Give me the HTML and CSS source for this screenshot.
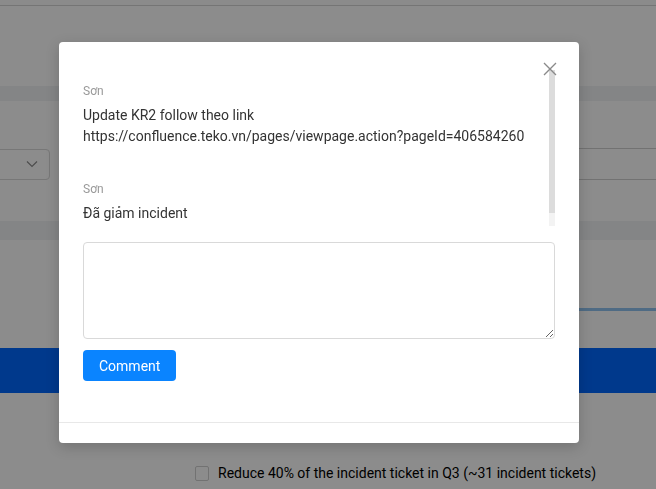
FILE: index.html
```html
<!DOCTYPE html>
<html lang="vi">
<head>
<meta charset="utf-8">
<title>Comments</title>
<link rel="stylesheet" href="styles.css">
</head>
<body>
<div class="page">
  <div class="topbar"></div>
  <div class="band band-1"></div>
  <div class="filters">
    <div class="select">
      <svg class="chev" width="12" height="8" viewBox="0 0 12 8"><path d="M1 1.5 L6 6.5 L11 1.5" fill="none" stroke="#8c8c8c" stroke-width="1.2"/></svg>
    </div>
    <div class="input"></div>
  </div>
  <div class="band band-2"></div>
  <div class="progress"></div>
  <div class="kr-title">Improvement on Quality</div>
  <div class="kr-band"></div>
  <label class="check-row"><span class="checkbox"></span><span class="check-text">Reduce 40% of the incident ticket in Q3 (~31 incident tickets)</span></label>
</div>

<div class="mask"></div>

<div class="modal">
  <button class="modal-close" aria-label="Close">
    <svg width="14" height="14" viewBox="0 0 14 14"><path d="M1 1 L13 13 M13 1 L1 13" stroke="#8a8a8a" stroke-width="1.3" fill="none"/></svg>
  </button>
  <div class="modal-body">
    <div class="comments-wrap">
      <div class="comments">
        <div class="comment">
          <div class="author">Sơn</div>
          <div class="text">Update KR2 follow theo link<br>https://confluence.teko.vn/pages/viewpage.action?pageId=406584260</div>
        </div>
        <div class="comment">
          <div class="author">Sơn</div>
          <div class="text">Đã giảm incident</div>
        </div>
      </div>
      <div class="scrollbar"><div class="thumb"></div></div>
    </div>
    <textarea class="comment-input"></textarea>
    <button class="btn-primary">Comment</button>
  </div>
  <div class="modal-footer"></div>
</div>
</body>
</html>
```

FILE: styles.css
```css
html, body {
  margin: 0;
  padding: 0;
  height: 100%;
  overflow: hidden;
}
body {
  font-family: Roboto, "Liberation Sans", Arial, sans-serif;
  background: #fff;
  position: relative;
}
.page {
  display: flex;
  flex-direction: column;
}
.topbar {
  height: 5px;
  border-bottom: 1px solid #d6d6d6;
  background: #fdfdfd;
}
.band {
  background: #f0f2f5;
}
.band-1 {
  margin-top: 80px;
  height: 15px;
}
.filters {
  margin-top: 47px;
  display: flex;
  align-items: center;
  height: 32px;
}
.select {
  margin-left: -40px;
  width: 90px;
  height: 31px;
  border: 1px solid #d9d9d9;
  border-radius: 4px;
  display: flex;
  align-items: center;
  justify-content: flex-end;
  padding-right: 11px;
  box-sizing: border-box;
}
.input {
  flex: 1;
  margin-left: 20px;
  height: 32px;
  box-sizing: border-box;
  border-top: 1px solid #d0d0d0;
  border-bottom: 1px solid #d0d0d0;
}
.band-2 {
  margin-top: 41px;
  height: 19px;
}
.progress {
  margin-top: 68px;
  margin-left: 560px;
  height: 3px;
  background: #90c4f0;
}
.kr-title {
  margin-top: 31px;
  height: 6px;
  font-size: 17px;
  line-height: 20px;
  color: #fff;
  white-space: nowrap;
  text-indent: -70px;
}
.kr-band {
  height: 45px;
  background: #0069ff;
}
.check-row {
  margin-top: 72px;
  display: flex;
  align-items: center;
  padding-left: 195px;
  gap: 9px;
  height: 16px;
}
.checkbox {
  width: 14px;
  height: 15px;
  box-sizing: border-box;
  border: 1px solid #d0d0d0;
  border-radius: 2px;
  background: #fff;
}
.check-text {
  font-size: 14px;
  color: #000;
  white-space: nowrap;
}

.mask {
  position: fixed;
  inset: 0;
  background: rgba(0, 0, 0, 0.45);
}

.modal {
  position: absolute;
  top: 42px;
  left: 59px;
  width: 520px;
  background: #fff;
  border-radius: 4px;
  box-shadow: 0 4px 14px rgba(0, 0, 0, 0.18);
}
.modal-close {
  position: absolute;
  top: 20px;
  right: 22px;
  width: 14px;
  height: 14px;
  padding: 0;
  border: 0;
  background: transparent;
  display: block;
  z-index: 2;
}
.modal-close svg {
  display: block;
}
.modal-body {
  padding: 24px 24px 41px;
}
.comments-wrap {
  display: flex;
  height: 160px;
}
.comments {
  flex: 1;
  overflow: hidden;
  padding-top: 16px;
}
.scrollbar {
  width: 6px;
  margin-top: 4px;
  background: #f3f3f3;
  display: flex;
  flex-direction: column;
}
.thumb {
  height: 143px;
  background: #dcdcdc;
}
.comment + .comment {
  margin-top: 33px;
}
.author {
  font-size: 12px;
  line-height: 18px;
  color: #999;
  margin-bottom: 5px;
}
.text {
  font-size: 14px;
  line-height: 21px;
  color: #333;
}
.comment-input {
  display: block;
  margin-top: 16px;
  width: 100%;
  height: 97px;
  box-sizing: border-box;
  border: 1px solid #d9d9d9;
  border-radius: 4px;
  resize: vertical;
  font-family: inherit;
  font-size: 14px;
  outline: none;
}
.btn-primary {
  display: block;
  margin-top: 11px;
  height: 31px;
  padding: 0 16px;
  border: 0;
  border-radius: 4px;
  background: #0a84ff;
  color: #fff;
  font-family: inherit;
  font-size: 14px;
}
.modal-footer {
  border-top: 1px solid #e8e8e8;
  height: 20px;
}
```
